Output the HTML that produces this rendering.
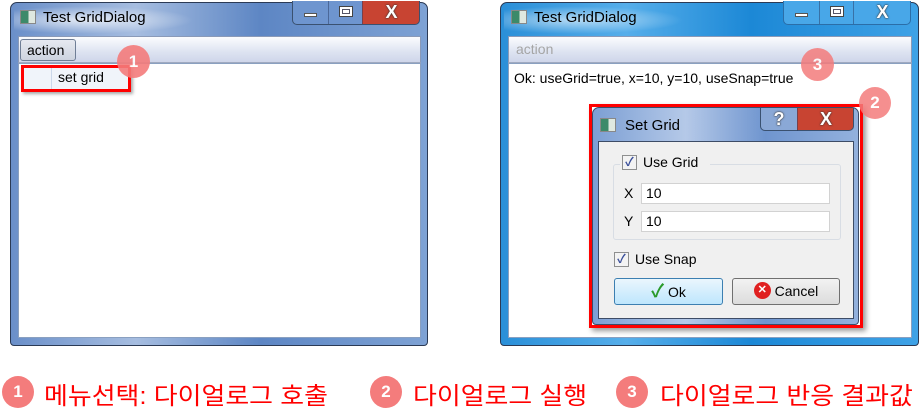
<!DOCTYPE html>
<html><head><meta charset="utf-8"><style>
*{margin:0;padding:0;box-sizing:border-box}
body{width:924px;height:420px;background:#fff;position:relative;overflow:hidden;font-family:"Liberation Sans","Noto Sans CJK KR",sans-serif;font-size:14px;color:#000}
.a{position:absolute}
.win{border-radius:7px 7px 4px 4px;border:1px solid #2b3a55}
.ico{width:16px;height:14px;border:1px solid #888;background:linear-gradient(90deg,#3c8a6a 0 55%,#dfe8e0 55%)}
.ttl{font-size:15px}
.cap{border:1px solid #3a5170;border-top:none;border-radius:0 0 5px 5px;top:1px;height:24px}
.btn{position:absolute;top:0;height:23px;border-left:1px solid rgba(40,60,100,.5)}
.x{color:#fff;font-weight:bold;font-size:18px;text-align:center;line-height:22px;text-shadow:0 0 2px #333,0 0 1px #333}
.menu{background:linear-gradient(#fbfcfe,#dde3f1 60%,#cfd6ea);border:1px solid #8a9ab8;border-bottom:1px solid #a0aac0}
.circ{border-radius:50%;background:#f47c7c;color:#fff;font-weight:bold;text-align:center}
.cb{width:15px;height:15px;border:1px solid #8e8f8f;background:#f3f3f3;font-size:12px;line-height:13px;text-align:center;color:#3a4f9a;font-weight:bold}
.fld{background:#fff;border:1px solid #d2d2d2;height:21px;padding-left:4px;line-height:19px}
.pb{border-radius:3px;height:27px;text-align:center;line-height:25px;font-size:14px}
.lab{color:#f00;font-size:24px;top:376px;transform:scaleX(1.08);transform-origin:0 0;white-space:nowrap}
.mn{position:absolute;left:11px;top:12px;width:13px;height:4px;background:#fff;border:1px solid #555}
.mx{position:absolute;left:10px;top:5px;width:14px;height:11px;border:1px solid #444;background:#fff;box-shadow:inset 0 0 0 2px #fff,inset 0 0 0 3px #556}
</style></head><body>

<!-- LEFT WINDOW -->
<div class="a win" style="left:10px;top:2px;width:418px;height:344px;background:linear-gradient(90deg,#6a8fc9,#a6bde0 30%,#5d86c4 60%,#7ea2d4)"></div>
<div class="a" style="left:14px;top:6px;width:180px;height:28px;background:radial-gradient(ellipse at 40% 50%,rgba(255,255,255,.75),rgba(255,255,255,0) 70%)"></div>
<div class="a ico" style="left:20px;top:10px"></div>
<div class="a ttl" style="left:43px;top:9px">Test GridDialog</div>
<div class="a cap" style="left:292px;width:128px;background:linear-gradient(90deg,#6e95cf 0 69px,#c84432 69px)">
 <div class="btn" style="left:0;width:35px;border:none"><div class="mn"></div></div>
 <div class="btn" style="left:35px;width:34px"><div class="mx"></div></div>
 <div class="btn x" style="left:69px;width:58px">X</div>
</div>
<div class="a menu" style="left:18px;top:36px;width:403px;height:27px"></div>
<div class="a" style="left:20px;top:39px;width:56px;height:22px;border:1px solid #6f7e96;border-radius:3px;background:linear-gradient(#e6e9f0,#cdd3df);padding-left:6px;line-height:20px;font-size:14px">action</div>
<div class="a" style="left:18px;top:63px;width:403px;height:275px;background:#fff;border:1px solid #8aa0c0"></div>
<div class="a" style="left:21px;top:65px;width:110px;height:27px;border:3px solid #f00;box-shadow:2px 2px 3px rgba(0,0,0,.35);background:#f0f4fa"><div class="a" style="left:27px;top:0;height:21px;border-left:1px solid #cbd8ea"></div><div class="a" style="left:34px;top:1px;font-size:14px">set grid</div></div>
<div class="a circ" style="left:117px;top:45px;width:33px;height:33px;line-height:33px;font-size:17px;opacity:.9">1</div>

<!-- RIGHT WINDOW -->
<div class="a win" style="left:500px;top:2px;width:419px;height:344px;background:linear-gradient(90deg,#2a8fd8,#56aeea 30%,#1c88d6 60%,#3fa2e6)"></div>
<div class="a" style="left:504px;top:6px;width:180px;height:28px;background:radial-gradient(ellipse at 40% 50%,rgba(255,255,255,.6),rgba(255,255,255,0) 70%)"></div>
<div class="a ico" style="left:511px;top:10px"></div>
<div class="a ttl" style="left:534px;top:9px">Test GridDialog</div>
<div class="a cap" style="left:783px;width:128px;background:#48a7e8;border-color:#2b6ea8">
 <div class="btn" style="left:0;width:35px;border:none"><div class="mn"></div></div>
 <div class="btn" style="left:35px;width:34px"><div class="mx"></div></div>
 <div class="btn x" style="left:69px;width:58px">X</div>
</div>
<div class="a menu" style="left:508px;top:36px;width:404px;height:27px"></div>
<div class="a" style="left:516px;top:41px;color:#a5a5a5">action</div>
<div class="a" style="left:508px;top:63px;width:404px;height:275px;background:#fff;border:1px solid #8aa0c0"></div>
<div class="a" style="left:514px;top:70px;font-size:14px">Ok: useGrid=true, x=10, y=10, useSnap=true</div>
<div class="a circ" style="left:801px;top:48px;width:33px;height:33px;line-height:33px;font-size:17px;opacity:.85">3</div>

<!-- DIALOG -->
<div class="a" style="left:589px;top:104px;width:274px;height:224px;border:3px solid #f00;box-shadow:3px 3px 5px rgba(0,0,0,.4)"></div>
<div class="a win" style="left:592px;top:107px;width:267px;height:218px;background:linear-gradient(90deg,#7c9fd4,#b5c9e8 35%,#6f95cf 65%,#93b1dd);border-color:#3a4c6a"></div>
<div class="a ico" style="left:600px;top:118px"></div>
<div class="a ttl" style="left:625px;top:117px">Set Grid</div>
<div class="a cap" style="left:760px;top:108px;width:94px;height:23px;background:linear-gradient(90deg,#8aa8d6 0 36px,#c84432 36px)">
 <div class="btn x" style="left:0;width:36px;border:none">?</div>
 <div class="btn x" style="left:36px;width:57px">X</div>
</div>
<div class="a" style="left:598px;top:141px;width:256px;height:178px;background:#f0f0f0;border:1px solid #3d4c66"></div>
<div class="a" style="left:613px;top:164px;width:228px;height:76px;border:1px solid #d8dde4;border-radius:3px"></div>
<div class="a" style="left:620px;top:154px;width:90px;height:18px;background:#f0f0f0"></div>
<div class="a cb" style="left:622px;top:155px">✓</div>
<div class="a" style="left:643px;top:154px">Use Grid</div>
<div class="a" style="left:624px;top:185px">X</div>
<div class="a fld" style="left:641px;top:183px;width:189px">10</div>
<div class="a" style="left:624px;top:213px">Y</div>
<div class="a fld" style="left:641px;top:211px;width:189px">10</div>
<div class="a cb" style="left:614px;top:252px">✓</div>
<div class="a" style="left:635px;top:251px">Use Snap</div>
<div class="a pb" style="left:614px;top:278px;width:109px;border:1px solid #3c7fb1;background:linear-gradient(#eaf6fd,#bee6fd)"><span style="color:#2a9a2a;font-weight:bold;font-size:18px">✓</span> Ok</div>
<div class="a pb" style="left:732px;top:278px;width:108px;border:1px solid #707070;background:linear-gradient(#f2f2f2,#dcdcdc)"><span style="display:inline-block;width:17px;height:17px;border-radius:50%;background:#e02020;color:#fff;font-size:11px;line-height:17px;font-weight:bold;vertical-align:middle;margin-top:-3px">✕</span> Cancel</div>
<div class="a circ" style="left:859px;top:87px;width:32px;height:32px;line-height:32px;font-size:17px;opacity:.85">2</div>

<!-- LABELS -->
<div class="a circ" style="left:2px;top:376px;width:32px;height:32px;line-height:32px;font-size:17px">1</div>
<div class="a lab" style="left:44px">메뉴선택: 다이얼로그 호출</div>
<div class="a circ" style="left:370px;top:376px;width:32px;height:32px;line-height:32px;font-size:17px">2</div>
<div class="a lab" style="left:413px">다이얼로그 실행</div>
<div class="a circ" style="left:616px;top:376px;width:32px;height:32px;line-height:32px;font-size:17px">3</div>
<div class="a lab" style="left:660px">다이얼로그 반응 결과값</div>
</body></html>
